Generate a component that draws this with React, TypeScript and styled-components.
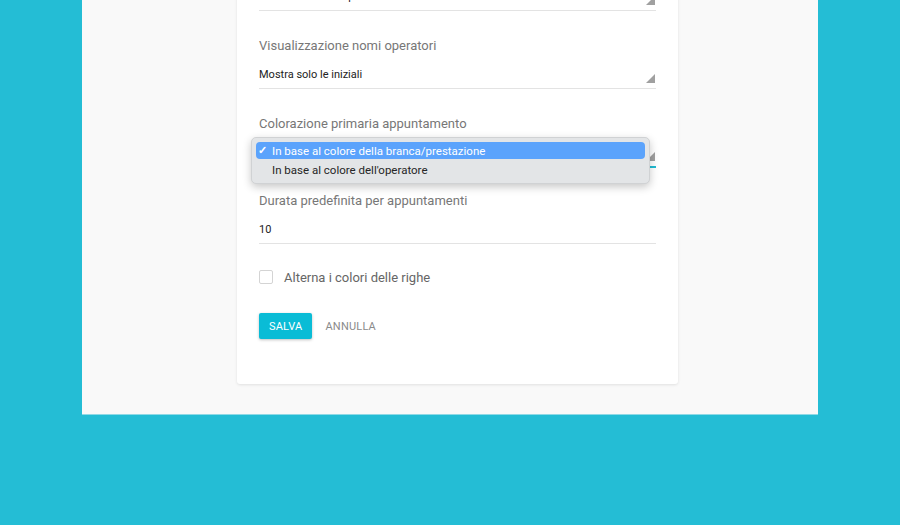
import styled, { createGlobalStyle } from 'styled-components'

const GlobalStyle = createGlobalStyle`
  html, body {
    margin: 0;
    padding: 0;
    background: #24bdd5;
    font-family: Roboto, "Liberation Sans", Arial, sans-serif;
  }
  * { box-sizing: border-box; }
`

const Viewport = styled.div`
  width: 900px;
  height: 525px;
  overflow: hidden;
  background: #24bdd5;
`

const Panel = styled.div`
  margin: 0 82px;
  width: 736px;
  background: #f9f9f9;
  padding: 0 0 30px 155px;
  border-bottom: 1px solid #8fd9e6;
`

const Card = styled.div`
  width: 441px;
  margin-top: -67px;
  background: #fff;
  border-radius: 3px;
  box-shadow: 0 1px 3px rgba(0, 0, 0, 0.1);
  padding: 0 22px 45px;
`

const Field = styled.div<{ $focused?: boolean }>`
  position: relative;
  padding-top: 26px;
  padding-bottom: 4px;
  border-bottom: ${p => (p.$focused ? '2px solid #22bcd3' : '1px solid #e3e3e3')};
  margin-bottom: ${p => (p.$focused ? '-2px' : '0')};
`

const Label = styled.div`
  height: 18px;
  line-height: 18px;
  font-size: 13px;
  color: #777;
`

const ValueRow = styled.div`
  display: flex;
  align-items: center;
  justify-content: space-between;
  margin-top: 11px;
  height: 18px;
`

const Value = styled.span`
  font-size: 11px;
  color: #222;
  line-height: 18px;
`

const Arrow = styled.span`
  width: 0;
  height: 0;
  margin-right: 1px;
  margin-top: 7px;
  border-style: solid;
  border-width: 0 0 9px 9px;
  border-color: transparent transparent #a0a0a0 transparent;
`

const Menu = styled.div`
  position: absolute;
  left: -8px;
  top: 48px;
  width: 399px;
  padding: 4px 4px 4px;
  background: #e3e5e7;
  border-radius: 5px;
  border: 1px solid #d0d2d4;
  box-shadow: 0 3px 8px rgba(0, 0, 0, 0.22);
  z-index: 2;
`

const Option = styled.div<{ $selected?: boolean }>`
  display: flex;
  align-items: center;
  height: 17px;
  border-radius: 4px;
  padding-left: 2px;
  font-size: 11.5px;
  background: ${p => (p.$selected ? '#5ba3fc' : 'transparent')};
  color: ${p => (p.$selected ? '#fff' : '#262626')};
  & + & {
    margin-top: 2px;
    height: 18px;
  }
`

const Check = styled.span`
  width: 14px;
  font-size: 11px;
  font-weight: 700;
`

const CheckRow = styled.label`
  display: flex;
  align-items: center;
  margin-top: 26px;
  height: 14px;
  gap: 11px;
  font-size: 13px;
  color: #666;
`

const Box = styled.span`
  width: 14px;
  height: 14px;
  border: 1px solid #d4d4d4;
  border-radius: 2px;
  background: #fff;
`

const Actions = styled.div`
  display: flex;
  align-items: center;
  gap: 13px;
  margin-top: 29px;
`

const Button = styled.button<{ $primary?: boolean }>`
  height: 26px;
  border: none;
  border-radius: 2px;
  font-family: inherit;
  font-size: 11px;
  letter-spacing: 0.2px;
  text-transform: uppercase;
  background: ${p => (p.$primary ? '#0abcd6' : 'transparent')};
  color: ${p => (p.$primary ? '#fff' : '#8a8a8a')};
  box-shadow: ${p => (p.$primary ? '0 1px 3px rgba(0,0,0,0.25)' : 'none')};
  padding: ${p => (p.$primary ? '0 10px' : '0')};
`

const fields = [
  { label: 'Visualizzazione prestazioni', value: 'Solo il nome della prestazione' },
  { label: 'Visualizzazione nomi operatori', value: 'Mostra solo le iniziali' },
]

export default function App() {
  return (
    <Viewport>
      <GlobalStyle />
      <Panel>
        <Card>
          {fields.map(f => (
            <Field key={f.label}>
              <Label>{f.label}</Label>
              <ValueRow>
                <Value>{f.value}</Value>
                <Arrow />
              </ValueRow>
            </Field>
          ))}
          <Field $focused>
            <Label>Colorazione primaria appuntamento</Label>
            <ValueRow>
              <Value>In base al colore della branca/prestazione</Value>
              <Arrow />
            </ValueRow>
            <Menu>
              <Option $selected>
                <Check>✓</Check>In base al colore della branca/prestazione
              </Option>
              <Option>
                <Check />In base al colore dell'operatore
              </Option>
            </Menu>
          </Field>
          <Field>
            <Label>Durata predefinita per appuntamenti</Label>
            <ValueRow>
              <Value>10</Value>
            </ValueRow>
          </Field>
          <CheckRow>
            <Box />
            Alterna i colori delle righe
          </CheckRow>
          <Actions>
            <Button $primary>Salva</Button>
            <Button>Annulla</Button>
          </Actions>
        </Card>
      </Panel>
    </Viewport>
  )
}
